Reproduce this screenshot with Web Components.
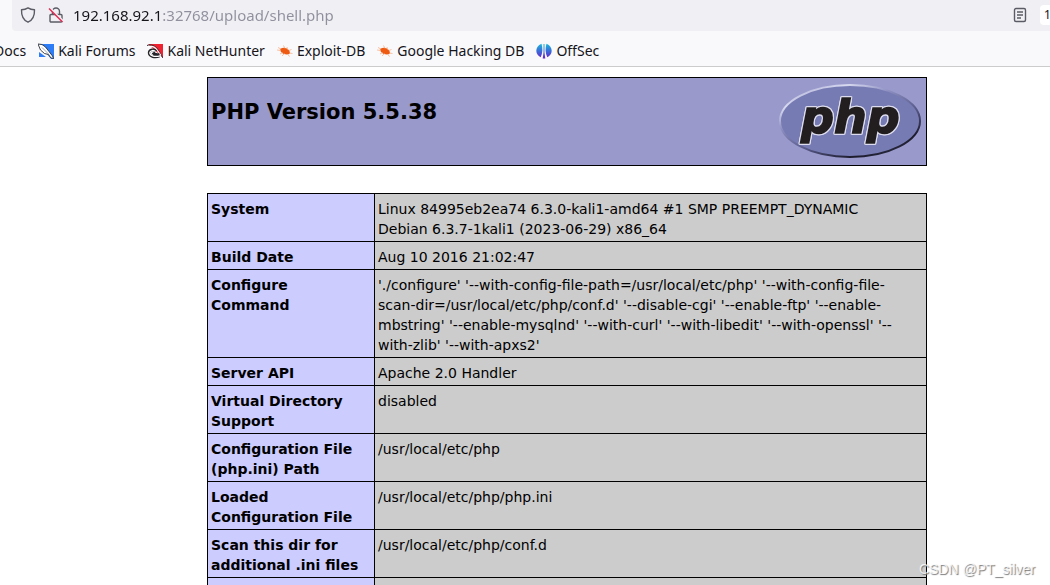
<!DOCTYPE html>
<html lang="en">
<head>
<meta charset="utf-8">
<meta name="viewport" content="width=device-width, initial-scale=1">
<title>phpinfo()</title>
<style>
  html, body { margin: 0; height: 100%; background: #fff; }
  body { overflow: hidden; font-family: "Noto Sans", sans-serif; }
</style>
</head>
<body>
<browser-window>
  <address-bar slot="chrome"></address-bar>
  <bookmark-bar slot="chrome">
    <bookmark-link>Docs</bookmark-link>
    <bookmark-link icon="forums">Kali Forums</bookmark-link>
    <bookmark-link icon="nethunter">Kali NetHunter</bookmark-link>
    <bookmark-link icon="exploit">Exploit-DB</bookmark-link>
    <bookmark-link icon="exploit">Google Hacking DB</bookmark-link>
    <bookmark-link icon="offsec">OffSec</bookmark-link>
  </bookmark-bar>
  <php-banner>PHP Version 5.5.38</php-banner>
  <php-info></php-info>
  <water-mark slot="overlay">CSDN @PT_silver</water-mark>
</browser-window>

<script>
const define = (name, html, setup) => {
  const template = document.createElement('template');
  template.innerHTML = html;
  customElements.define(name, class extends HTMLElement {
    constructor() {
      super();
      this.attachShadow({ mode: 'open' }).append(template.content.cloneNode(true));
    }
    connectedCallback() { if (setup) setup(this, this.shadowRoot); }
  });
};

define('browser-window', `
<style>
  :host { display: flex; flex-direction: column; height: 100vh; position: relative; overflow: hidden; }
  header { flex: none; background: #f9f9fb; border-bottom: 1px solid #ccc; }
  main { flex: 1; min-height: 0; overflow: auto; scrollbar-width: none; padding: 10px 0 0 84px; }
</style>
<header><slot name="chrome"></slot></header>
<main><slot></slot></main>
<slot name="overlay"></slot>`);

define('address-bar', `
<style>
  :host { display: block; padding-left: 12px; overflow: hidden; }
  .field { display: flex; align-items: center; height: 30px; padding: 0 0 1px 8px;
    background: #f0f0f4; border-radius: 0 0 0 4px; }
  button { flex: none; border: 0; padding: 0; background: none; display: flex; color: #5b5b66; }
  .lock { margin-left: 12px; }
  input { flex: 1; min-width: 0; height: 28px; margin-left: 9px; padding: 0; border: 0; outline: 0;
    font: 15px/28px "Noto Sans", sans-serif; color: transparent;
    background: linear-gradient(90deg, #15141a 88px, #8f8f9d 88px); -webkit-background-clip: text; background-clip: text; }
  .zoom { box-sizing: border-box; height: 20px; margin-left: 12px; padding: 0 0 0 4px; width: 10px; border-radius: 4px 0 0 4px;
    background: #fff; color: #15141a; font: 12px/20px "Noto Sans", sans-serif; text-align: left; }
</style>
<div class="field">
  <button aria-label="Tracking protection">
    <svg width="16" height="16" viewBox="0 0 16 16" fill="none" stroke="#5b5b66" stroke-width="1.4" stroke-linejoin="round"><path d="M8 .9C6.200 2.100 4 2.700 1.500 2.800 1.300 8.500 2.800 13 8 15.200 13.200 13 14.700 8.500 14.500 2.800 12 2.700 9.800 2.100 8 .9z"/></svg>
  </button>
  <button class="lock" aria-label="Connection is not secure">
    <svg width="16" height="16" viewBox="0 0 16 16" fill="none"><path d="M4.500 7V4.500a3.500 3.500 0 0 1 7 0V7M3 7.500h10a1 1 0 0 1 1 1V14a1 1 0 0 1-1 1H3a1 1 0 0 1-1-1V8.500a1 1 0 0 1 1-1z" stroke="#5b5b66" stroke-width="1.400"/><path d="M2.500 1.500l12.500 12.500" stroke="#f0f0f4" stroke-width="2"/><path d="M1 1.500l13.500 13.500" stroke="#e22850" stroke-width="1.400"/></svg>
  </button>
  <input aria-label="Address" value="192.168.92.1:32768/upload/shell.php" spellcheck="false">
  <button aria-label="Reader view">
    <svg width="16" height="16" viewBox="0 0 16 16" fill="none" stroke="#5b5b66" stroke-width="1.400"><rect x="2.500" y="1.500" width="11" height="13" rx="1.500"/><path d="M5 5h6M5 8h6M5 11h4"/></svg>
  </button>
  <button class="zoom">1</button>
</div>`);

define('bookmark-bar', `
<style>
  :host { display: block; overflow: hidden; }
  nav { display: flex; align-items: center; gap: 12px; height: 31px; margin-left: -6px; padding-top: 4px; }
</style>
<nav aria-label="Bookmarks"><slot></slot></nav>`);

const icons = {
  forums: '<path d="M1 1h15v15h-3z" fill="#2f7df6"/><path d="M1 9v5h7z" fill="#2f7df6"/><path d="M0 1l4 .5 3.500 2.500 3.500 4.500 3.500 4.500 1 2.500-2.500-.5-2.500-3.500-4-1-4-3.500z" fill="#fff" stroke="#2b3038" stroke-width=".9" stroke-linejoin="round"/><path d="M4 4.500l7 7" stroke="#8a9099" stroke-width=".8" fill="none"/>',
  nethunter: '<path d="M1 1h15v14l-3-3z" fill="#ee2230"/><path d="M0 2.500C4 1 8 2.500 11 6.500l5 8.500" fill="none" stroke="#2b2b30" stroke-width="1"/><path d="M1 4c4-1.500 7 0 9.500 3.500l3.500 5" fill="none" stroke="#fff" stroke-width="1.200"/><path d="M12.500 13C8 15 2.500 13.500 2.200 10 2.200 6.500 7.500 5.800 9 8.500M6 9.500c1 2 3.500 2.500 6.500 2" fill="none" stroke="#25252a" stroke-width="2.800"/><path d="M13 12.800C8 14.300 3 13 2.800 9.800 3 7.200 7 6.700 8.500 8.700" fill="none" stroke="#fff" stroke-width="1.300"/>',
  exploit: '<path d="M3.500 5.800C6 4 9.500 4.600 11.500 6.800c1.500 1.700 2 3.600.8 4.200-2.300 1-6 .4-8-1.700C3.200 8 2.800 6.700 3.500 5.800z" fill="#ee5a12"/><path d="M1 4.500l3 1.500M0 7l4 .5M3 11l2.500-1.500M5 13l2.500-2.500M6.500 2.500l1.500 3M10 4l.5 2.500M12 7.500l2.500-1M12.500 10l3 .5M10.500 11l2 2.500" stroke="#f7b08a" stroke-width=".8" fill="none"/>',
  offsec: '<defs><linearGradient id="o" x1="0" y1="0" x2="0" y2="16" gradientUnits="userSpaceOnUse"><stop offset="0" stop-color="#18c0dc"/><stop offset=".5" stop-color="#3a6cd8"/><stop offset="1" stop-color="#6a1ccc"/></linearGradient></defs><g fill="url(#o)"><path d="M5.500.8C6.800 5 6.800 10 4.700 14.200 2 12.800.3 10.500.3 7.800S2 2.200 5.500.8zM10.500.8c3.500 1.400 5.200 4.300 5.200 7s-1.700 5-4.400 6.400C9.200 10 9.200 5 10.500.8zM7.500 1h1v8.500l.8 6H6.700l.8-6z"/></g>'
};
define('bookmark-link', `
<style>
  :host { display: block; flex: none; }
  a { display: flex; align-items: center; gap: 4px; color: #15141a; text-decoration: none;
    font: 14px/20px "Noto Sans", sans-serif; white-space: nowrap; }
  svg { flex: none; }
</style>
<a href="#"><slot></slot></a>`, (el, root) => {
  const art = icons[el.getAttribute('icon')];
  if (art) root.querySelector('a').insertAdjacentHTML('afterbegin',
    '<svg width="16" height="16" viewBox="0 0 16 16" aria-hidden="true">' + art + '</svg>');
});

define('php-banner', `
<style>
  :host { display: flex; justify-content: space-between; align-items: flex-start; box-sizing: border-box;
    max-width: 720px; height: 89px; margin: 0 auto; padding: 4px 4px 4px 3px; border: 1px solid #000; background: #9999cc; color: #000; }
  h1 { margin: 16px 0 0; font: bold 21px/28px "DejaVu Sans", sans-serif; }
  text { font: italic bold 46px "DejaVu Sans", sans-serif;
    filter: drop-shadow(1px 0 #dde) drop-shadow(-1px 0 #dde) drop-shadow(0 1px #dde) drop-shadow(0 -1px #dde); }
</style>
<h1><slot></slot></h1>
<svg width="144" height="78" viewBox="0 0 144 78" role="img" aria-label="PHP logo">
  <defs>
    <linearGradient id="rim" x1="0.15" y1="0" x2="0.85" y2="1">
      <stop offset="0" stop-color="#a4a6d0"/><stop offset=".15" stop-color="#d8daf0"/><stop offset=".35" stop-color="#8c8ec0"/>
      <stop offset=".6" stop-color="#5a5c8c"/><stop offset=".85" stop-color="#1c1c2c"/><stop offset="1" stop-color="#333350"/>
    </linearGradient>
  </defs>
  <ellipse cx="72" cy="39" rx="70" ry="36" fill="#777bb3" stroke="url(#rim)" stroke-width="2"/>
  <text x="23" y="51" fill="#221e1f" stroke="#221e1f" stroke-width="1.600">php</text>
</svg>`);

define('php-info', `
<style>
  :host { display: block; max-width: 720px; margin: 27px auto 0; }
  table { width: 100%; table-layout: fixed; border-collapse: collapse; color: #000; font: 14px/20px "DejaVu Sans", sans-serif; }
  col:first-child { width: 167px; }
  th, td { border: 1px solid #000; padding: 5px 3px 2px; vertical-align: top; text-align: left; }
  th { background: #ccccff; font-weight: bold; }
  td { background: #cccccc; }
</style>
<table>
  <colgroup><col><col></colgroup>
  <tbody>
    <tr><th scope="row">System</th><td>Linux 84995eb2ea74 6.3.0-kali1-amd64 #1 SMP PREEMPT_DYNAMIC<br>Debian 6.3.7-1kali1 (2023-06-29) x86_64</td></tr>
    <tr><th scope="row">Build Date</th><td>Aug 10 2016 21:02:47</td></tr>
    <tr><th scope="row">Configure<br>Command</th><td>'./configure' '--with-config-file-path=/usr/local/etc/php' '--with-config-file-<br>scan-dir=/usr/local/etc/php/conf.d' '--disable-cgi' '--enable-ftp' '--enable-<br>mbstring' '--enable-mysqlnd' '--with-curl' '--with-libedit' '--with-openssl' '--<br>with-zlib' '--with-apxs2'</td></tr>
    <tr><th scope="row">Server API</th><td>Apache 2.0 Handler</td></tr>
    <tr><th scope="row">Virtual Directory Support</th><td>disabled</td></tr>
    <tr><th scope="row">Configuration File (php.ini) Path</th><td>/usr/local/etc/php</td></tr>
    <tr><th scope="row">Loaded Configuration File</th><td>/usr/local/etc/php/php.ini</td></tr>
    <tr><th scope="row">Scan this dir for additional .ini files</th><td>/usr/local/etc/php/conf.d</td></tr>
    <tr><th scope="row">&nbsp;</th><td>&nbsp;</td></tr>
  </tbody>
</table>`);

define('water-mark', `
<style>
  :host { position: absolute; right: 15px; bottom: 7px; color: rgba(255,255,255,.8);
    font: 14px/18px "Liberation Sans", sans-serif; text-shadow: 1px 1px 1px #777; }
</style>
<slot></slot>`);
</script>
</body>
</html>
